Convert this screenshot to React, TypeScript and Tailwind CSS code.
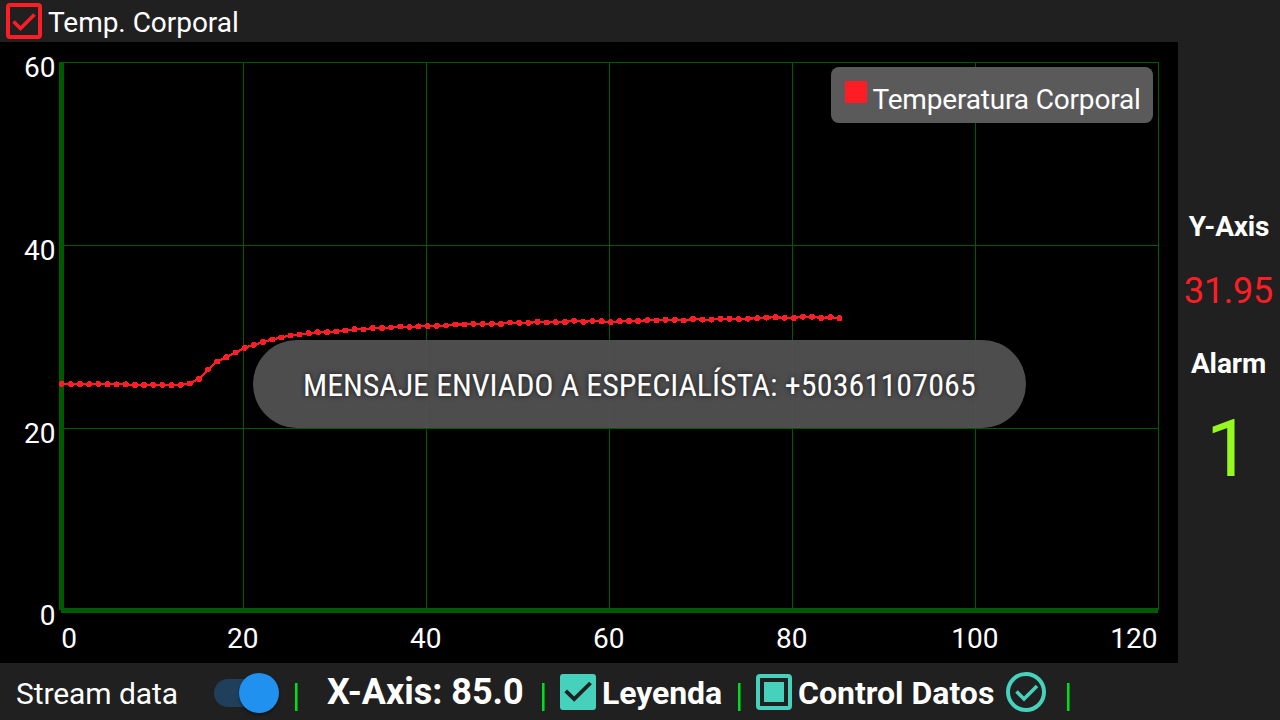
const SAMPLES = [
  383.7, 384, 383.7, 384, 383.7, 384, 384.2, 384.2, 384.7, 384.7, 384.7, 384.7, 385, 384.7, 383.3, 378.7, 369.3, 361.3,
  357, 352.3, 347.7, 344.7, 341.7, 339.3, 337.3, 335.3, 334.3, 333, 332, 332, 331.3, 330.3, 329, 329.3, 327.8, 327.7,
  327.3, 326.3, 326.8, 326.2, 326, 325.7, 325.3, 324.3, 324.3, 323.7, 323.7, 323.7, 323.7, 322.3, 322.7, 322.7, 321.7,
  322.3, 322, 321.7, 320.5, 321.6, 320.8, 321, 322, 321, 320.8, 320.8, 320, 320.3, 319.5, 319.7, 320.3, 318.7, 319.4,
  319.4, 318.5, 318.6, 319, 318.5, 318, 317.4, 317, 317.7, 317.8, 316.5, 316.6, 317.7, 317, 318,
];

const POINTS = SAMPLES.map((y, i) => ({ x: 61.7 + i * 9.15, y: y + 0.2 }));
const X_TICKS = [
  { label: '0', x: 69 },
  { label: '20', x: 242.8 },
  { label: '40', x: 425.8 },
  { label: '60', x: 608.8 },
  { label: '80', x: 791.8 },
  { label: '100', x: 974.8 },
  { label: '120', x: 1133.8 },
];
const Y_TICKS = [
  { label: '60', y: 77 },
  { label: '40', y: 260 },
  { label: '20', y: 443 },
  { label: '0', y: 625 },
];

function Chart() {
  return (
    <svg width="1178" height="621" viewBox="0 42 1178 621" className="block">
      <g fill="#005a00" shapeRendering="crispEdges">
        {[62, 245, 428].map((y) => (
          <rect key={y} x="62" y={y} width="1097" height="1" />
        ))}
        {[243, 426, 609, 792, 975, 1158].map((x) => (
          <rect key={x} x={x} y="62" width="1" height="548" />
        ))}
        <rect x="59" y="62" width="5" height="548" />
        <rect x="61" y="608" width="1097" height="5" />
      </g>
      <g fill="#fff" fontSize="28">
        {Y_TICKS.map((t) => (
          <text key={t.label} x="55.5" y={t.y} textAnchor="end">{t.label}</text>
        ))}
        {X_TICKS.map((t) => (
          <text key={t.label} x={t.x} y="648" textAnchor="middle">{t.label}</text>
        ))}
      </g>
      <g fill="#ff1d25" shapeRendering="crispEdges">
        <polyline points={POINTS.map((p) => `${p.x},${p.y}`).join(' ')} fill="none" stroke="#ff1d25" strokeWidth="2.2" />
        {POINTS.map((p, i) => (
          <circle key={i} cx={p.x} cy={p.y} r="3" />
        ))}
      </g>
    </svg>
  );
}

function Legend() {
  return (
    <div className="absolute left-[831px] top-[25px] flex h-14 w-[322px] rounded-[8px] bg-[#5a5a5a]">
      <div className="ml-[14px] mt-[14px] size-[22px] bg-[#ff1d25]" />
      <span className="ml-[5.5px] mt-[13px] whitespace-nowrap text-[28px] leading-10 tracking-[-0.17px]">Temperatura Corporal</span>
    </div>
  );
}

function Toast() {
  return (
    <div className="absolute left-[253px] top-[298px] flex h-[88px] w-[773px] items-center justify-center rounded-full bg-[#525252]/94 pt-[2px]">
      <span className="whitespace-pre text-[32px] leading-none [font-family:'Roboto_Condensed',Roboto,sans-serif] [font-stretch:75%] [text-shadow:0_0_5px_rgba(0,0,0,0.7)]">
        <span className="tracking-[-0.08px]">MENSAJE ENVIADO A ESPECIALÍSTA: </span>
        <span className="tracking-[0.12px]">+50361107065</span>
      </span>
    </div>
  );
}

function Divider({ className }: { className: string }) {
  return <div className={`mt-5 h-7 w-[3px] shrink-0 border-r border-[#0b8a18] bg-[#00dc1e] ${className}`} />;
}

export default function App() {
  return (
    <div className="flex h-[720px] w-[1280px] overflow-hidden bg-[#202020] font-[Roboto,sans-serif] text-white">
      <div className="flex w-[1178px] shrink-0 flex-col">
        <header className="flex h-[42px] shrink-0 pl-[6px] pt-[3px]">
          <svg width="36" height="36" viewBox="0 0 36 36" fill="none" stroke="#ff1d25" strokeWidth="4">
            <rect x="2" y="2" width="32" height="32" rx="2" />
            <path d="M7.5 18.5l7 7L28.5 11.5" strokeWidth="3.6" />
          </svg>
          <span className="ml-[6px] text-[28px] leading-[40px] tracking-[-0.03px]">Temp. Corporal</span>
        </header>
        <main className="relative h-[621px] shrink-0 bg-black">
          <Chart />
          <Legend />
          <Toast />
        </main>
        <footer className="flex h-[57px] shrink-0 whitespace-nowrap">
          <span className="ml-4 w-[198px] text-[30px] leading-[62px] tracking-[-0.08px]">Stream data</span>
          <div className="mt-4 h-7 w-[56px] rounded-full bg-[#203f5a]">
            <div className="-mt-[6px] ml-[25px] size-10 rounded-full bg-[#2191f0] shadow-[0_2px_3px_rgba(0,0,0,0.4)]" />
          </div>
          <Divider className="ml-[25px]" />
          <span className="ml-[29px] w-[215px] text-[36px] font-bold leading-[58px] tracking-[-0.03px]">X-Axis: 85.0</span>
          <Divider className="" />
          <svg className="ml-[15px] mt-[11px] shrink-0" width="36" height="36" viewBox="0 0 36 36" fill="none">
            <rect width="36" height="36" rx="3" fill="#46d1bd" />
            <path d="M5.7 16.9l8.5 8.3L30.5 9" stroke="#202020" strokeWidth="3.8" />
          </svg>
          <span className="ml-[6px] w-[136px] text-[32px] font-bold leading-[60px] tracking-[-0.08px]">Leyenda</span>
          <Divider className="" />
          <svg className="ml-[15px] mt-[11px] shrink-0" width="36" height="36" viewBox="0 0 36 36" fill="none">
            <rect x="2" y="2" width="32" height="32" rx="2" stroke="#46d1bd" strokeWidth="4" />
            <rect x="8" y="8" width="20" height="20" fill="#46d1bd" />
          </svg>
          <span className="ml-[6px] w-[208px] text-[32px] font-bold leading-[60px]">Control Datos</span>
          <svg className="mt-[9px] shrink-0" width="40" height="40" viewBox="0 0 40 40" fill="none" stroke="#46d1bd" strokeWidth="4">
            <circle cx="20" cy="20" r="18" />
            <path d="M10.5 19.5L18 27l13-13" strokeWidth="3.6" />
          </svg>
          <Divider className="ml-[21px]" />
        </footer>
      </div>
      <aside className="flex w-[102px] shrink-0 flex-col items-center pt-[209px]">
        <span className="text-[28px] font-bold leading-9 tracking-[-0.2px]">Y-Axis</span>
        <span className="mr-[1px] mt-[24px] text-[36px] leading-[44px] tracking-[-0.25px] text-[#ff1d25]">31.95</span>
        <span className="mr-[1px] mt-[33px] text-[28px] font-bold leading-9 tracking-[-0.1px]">Alarm</span>
        <span className="mr-[1px] mt-[20px] text-[80px] leading-[94px] text-[#95f81f]">1</span>
      </aside>
    </div>
  );
}
